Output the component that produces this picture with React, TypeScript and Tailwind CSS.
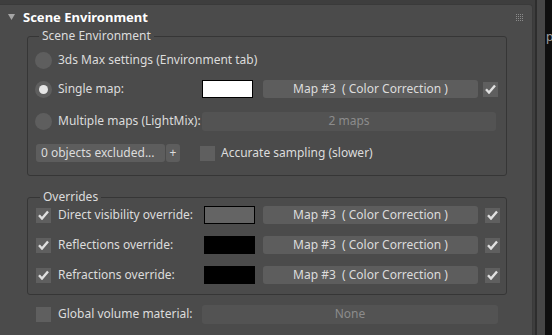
import React from 'react';

const font = { fontFamily: '"Noto Sans", "Open Sans", sans-serif' };

function Radio({ checked = false }: { checked?: boolean }) {
  return (
    <div className="w-[17px] h-[17px] rounded-full bg-[#5e5e5e] flex items-center justify-center shrink-0">
      {checked && <div className="w-[9px] h-[9px] rounded-full bg-[#e6e6e6]" />}
    </div>
  );
}

function Check({ checked = false }: { checked?: boolean }) {
  return (
    <div className="w-[15px] h-[15px] bg-[#5f5f5f] flex items-center justify-center shrink-0">
      {checked && (
        <svg width="11" height="10" viewBox="0 0 11 10">
          <path d="M1 5.2 L4 8.5 L10 1.5" stroke="#e0e0e0" strokeWidth="2.4" fill="none" />
        </svg>
      )}
    </div>
  );
}

function MapButton({ label = 'Map #3  ( Color Correction )' }: { label?: string }) {
  return (
    <div className="w-[215px] h-[18px] rounded-[3px] bg-[#5d5d5d] flex items-center justify-center text-[#dcdcdc] whitespace-pre shrink-0">
      {label}
    </div>
  );
}

function Swatch({ color }: { color: string }) {
  return <div className={`w-[51px] h-[18px] border border-black shrink-0 ${color}`} />;
}

export default function App() {
  return (
    <div
      className="w-[552px] h-[335px] flex bg-[#0f0f0f] overflow-hidden text-[12px] leading-none whitespace-nowrap"
      style={font}
    >
      <div className="w-[535px] h-full bg-[#3e3e3e] pt-[4px] shrink-0">
        <div className="w-[533px] h-[400px] bg-[#4b4b4b] border-t border-r border-[#3a3a3a] rounded-tr-[4px]">
          {/* rollout header */}
          <div className="h-[24px] flex items-center">
            <svg className="ml-[8px]" width="7" height="6" viewBox="0 0 7 6">
              <path d="M0 0 H7 L3.5 6 Z" fill="#a6a6a6" />
            </svg>
            <span className="ml-[8px] font-bold text-white text-[13px]">Scene Environment</span>
            <svg className="ml-auto mr-[9px]" width="7" height="7" viewBox="0 0 7 7">
              {[0, 2, 4, 6].map((x) =>
                [0, 2, 4, 6].map((y) => <rect key={`${x}-${y}`} x={x} y={y} width="1" height="1" fill="#8a8a8a" />),
              )}
            </svg>
          </div>

          {/* Scene Environment group */}
          <fieldset className="ml-[27px] w-[480px] border border-[#363636] rounded-[3px] pl-[7px] pb-[10px] text-[#dcdcdc]">
            <legend className="ml-[4px] px-[3px] h-[14px] leading-[14px]">Scene Environment</legend>
            <div className="mt-[5px] h-[24px] flex items-center">
              <Radio />
              <span className="ml-[6px]">3ds Max settings (Environment tab)</span>
            </div>
            <div className="mt-[5px] h-[24px] flex items-center">
              <Radio checked />
              <span className="ml-[6px] w-[144px]">Single map:</span>
              <Swatch color="bg-white" />
              <div className="ml-[10px]">
                <MapButton />
              </div>
              <div className="ml-[5px]">
                <Check checked />
              </div>
            </div>
            <div className="mt-[8px] h-[24px] flex items-center">
              <Radio />
              <span className="ml-[6px] w-[144px]">Multiple maps (LightMix):</span>
              <div className="w-[294px] h-[19px] rounded-[3px] bg-[#535353] flex items-center justify-center text-[#8c8c8c]">
                2 maps
              </div>
            </div>
            <div className="mt-[8px] h-[24px] flex items-center">
              <div className="ml-[1px] w-[129px] h-[18px] rounded-[3px] bg-[#5d5d5d] flex items-center pl-[5px]">
                0 objects excluded...
              </div>
              <div className="ml-[1px] w-[14px] h-[18px] rounded-[3px] bg-[#5d5d5d] flex items-center justify-center">
                +
              </div>
              <div className="ml-[20px]">
                <Check />
              </div>
              <span className="ml-[6px]">Accurate sampling (slower)</span>
            </div>
          </fieldset>

          {/* Overrides group */}
          <fieldset className="mt-[14px] ml-[27px] w-[480px] border border-[#363636] rounded-[3px] pl-[8px] pb-[8px] text-[#dcdcdc]">
            <legend className="ml-[4px] px-[3px] h-[14px] leading-[14px]">Overrides</legend>
            {[
              { label: 'Direct visibility override:', color: 'bg-[#646464]' },
              { label: 'Reflections override:', color: 'bg-black' },
              { label: 'Refractions override:', color: 'bg-black' },
            ].map((row, i) => (
              <div key={row.label} className={`h-[22px] flex items-center ${i === 0 ? 'mt-0' : 'mt-[8px]'}`}>
                <Check checked />
                <span className="ml-[7px] w-[146px]">{row.label}</span>
                <Swatch color={row.color} />
                <div className="ml-[8px]">
                  <MapButton />
                </div>
                <div className="ml-[7px]">
                  <Check checked />
                </div>
              </div>
            ))}
          </fieldset>

          {/* Global volume */}
          <div className="mt-[8px] h-[22px] flex items-center pl-[36px] text-[#dcdcdc]">
            <Check />
            <span className="ml-[7px] w-[144px]">Global volume material:</span>
            <div className="w-[296px] h-[19px] rounded-[3px] bg-[#535353] flex items-center justify-center text-[#8c8c8c]">
              None
            </div>
          </div>
        </div>
      </div>
      <div className="w-[2px] h-full bg-[#2e2e2e] shrink-0" />
      <div className="w-[8px] h-full bg-[#474747] shrink-0" />
      <div className="flex-1 h-full pt-[31px] overflow-hidden text-[#a0a0a0]">
        <span className="pl-[1px]">p</span>
      </div>
    </div>
  );
}
